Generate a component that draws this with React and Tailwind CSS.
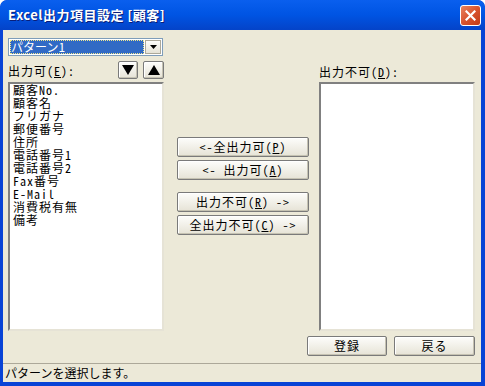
import React from "react";

const font = { fontFamily: '"Noto Sans CJK JP", "Noto Sans", sans-serif' };
const mono = { fontFamily: '"Noto Sans Mono CJK JP", "Noto Sans CJK JP", monospace' };

function Btn({ children, className = "" }) {
  return (
    <div
      style={mono}
      className={
        "flex items-center justify-center border border-[#7A7A7A] rounded-[2px] bg-gradient-to-b from-[#FDFDFB] to-[#E6E3D6] text-[12px] leading-none text-black tracking-[1px] shadow-[inset_-1px_-1px_0_#C5C2B2,inset_1px_1px_0_#FFFFFF] " +
        className
      }
    >
      {children}
    </div>
  );
}

const U = ({ c }) => <span className="underline underline-offset-1">{c}</span>;

const items = [
  "顧客No.",
  "顧客名",
  "フリガナ",
  "郵便番号",
  "住所",
  "電話番号1",
  "電話番号2",
  "Fax番号",
  "E-Mail",
  "消費税有無",
  "備考",
];

export default function App() {
  return (
    <div
      style={font}
      className="w-[485px] h-[386px] bg-[#0843D6] rounded-t-[7px] flex flex-col overflow-hidden"
    >
      {/* title bar */}
      <div className="h-[30px] shrink-0 flex items-center justify-between pl-[8px] pr-[4px] bg-gradient-to-b from-[#0A5FEE] via-[#0054E3] to-[#0443C8] rounded-t-[7px]">
        <span className="text-white font-bold text-[13px] tracking-[0.5px] [text-shadow:1px_1px_0_#0A1E7A]">
          Excel出力項目設定 [顧客]
        </span>
        <div className="w-[21px] h-[21px] rounded-[3px] border border-white bg-gradient-to-br from-[#E8835F] via-[#D8532E] to-[#C23A14] flex items-center justify-center">
          <svg width="11" height="11" viewBox="0 0 11 11">
            <path d="M1.5 1.5 L9.5 9.5 M9.5 1.5 L1.5 9.5" stroke="white" strokeWidth="2.2" strokeLinecap="square" />
          </svg>
        </div>
      </div>

      {/* client */}
      <div className="flex-1 ml-[3px] mr-[4px] mb-[4px] bg-[#ECE9D8] flex flex-col">
        <div className="flex items-start pt-[8px] pl-[5px]">
          {/* left col */}
          <div className="w-[156px] flex flex-col">
            <div className="h-[18px] w-[155px] bg-white border border-[#7F9DB9] flex items-center p-[1px]">
              <div className="flex-1 h-full bg-[#316AC5] outline outline-1 outline-dotted outline-[#F0E68C] -outline-offset-1 text-white text-[12px] leading-none flex items-center pl-[1px]">
                パターン1
              </div>
              <div className="w-[16px] h-full ml-[1px] bg-gradient-to-b from-[#FDFDFB] to-[#E6E3D6] border border-[#ACA899] flex items-center justify-center">
                <svg width="7" height="4" viewBox="0 0 7 4"><path d="M0 0H7L3.5 4Z" fill="#000" /></svg>
              </div>
            </div>
            <div className="h-[26px] flex items-end justify-between pb-[3px]">
              <span style={mono} className="text-[12px] leading-none text-black tracking-[1px] pb-[2px]">
                出力可(<U c="E" />):
              </span>
              <div className="flex gap-[5px]">
                <Btn className="w-[20px] h-[18px]">
                  <svg width="12" height="10" viewBox="0 0 12 10"><path d="M0 0H12L6 10Z" fill="#000" /></svg>
                </Btn>
                <Btn className="w-[21px] h-[18px]">
                  <svg width="12" height="10" viewBox="0 0 12 10"><path d="M0 10H12L6 0Z" fill="#000" /></svg>
                </Btn>
              </div>
            </div>
            <div className="h-[249px] bg-white border-2 border-t-[#808080] border-l-[#808080] border-r-[#E6E3D6] border-b-[#E6E3D6] pl-[3px]">
              {items.map((t) => (
                <div key={t} style={mono} className="h-[13px] text-[12px] leading-[11px] text-black tracking-[1px]">
                  {t}
                </div>
              ))}
            </div>
          </div>

          {/* middle col */}
          <div className="w-[132px] ml-[13px] mt-[99px] flex flex-col">
            <Btn className="h-[20px]"><span>&lt;-全出力可(<U c="P" />)</span></Btn>
            <Btn className="h-[20px] mt-[3px]"><span>&lt;- 出力可(<U c="A" />)</span></Btn>
            <Btn className="h-[20px] mt-[12px]"><span>出力不可(<U c="R" />) -&gt;</span></Btn>
            <Btn className="h-[20px] mt-[3px]"><span>全出力不可(<U c="C" />) -&gt;</span></Btn>
          </div>

          {/* right col */}
          <div className="w-[156px] ml-[10px] flex flex-col">
            <div className="h-[44px] flex items-end pb-[4px]">
              <span style={mono} className="text-[12px] leading-none text-black tracking-[1px]">
                出力不可(<U c="D" />):
              </span>
            </div>
            <div className="h-[249px] bg-white border-2 border-t-[#808080] border-l-[#808080] border-r-[#E6E3D6] border-b-[#E6E3D6]" />
          </div>
        </div>

        {/* bottom buttons */}
        <div className="flex justify-end gap-[7px] pr-[6px] mt-[5px]">
          <Btn className="w-[80px] h-[20px]">登録</Btn>
          <Btn className="w-[81px] h-[20px]">戻る</Btn>
        </div>

        {/* status */}
        <div className="mt-auto border-t border-[#ACA899] h-[19px] flex items-center pl-[2px]">
          <span className="text-[12px] leading-none text-black">パターンを選択します。</span>
        </div>
      </div>
    </div>
  );
}
